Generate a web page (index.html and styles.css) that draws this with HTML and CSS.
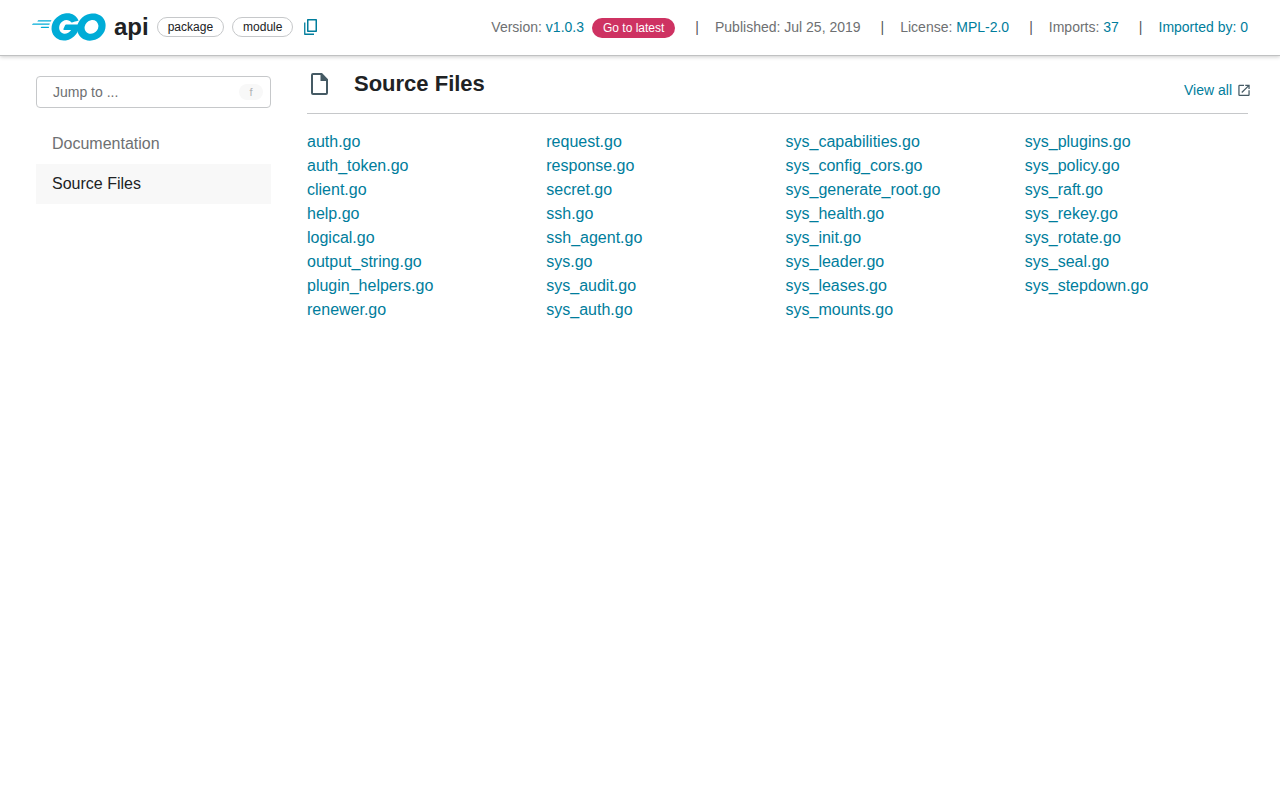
FILE: index.html
```html
<!DOCTYPE html>
<html lang="en">
<head>
<meta charset="utf-8">
<meta name="viewport" content="width=device-width, initial-scale=1">
<title>api package</title>
<link rel="stylesheet" href="styles.css">
</head>
<body>
<header class="header">
  <div class="header-title">
    <a class="logo" href="#" aria-label="Go">
      <svg width="74" height="28" viewBox="24.7 78 206.5 77" fill="#00acd7" fill-rule="evenodd" aria-hidden="true">
        <path d="M40.2,101.1c-0.4,0-0.5-0.2-0.3-0.5l2.1-2.7c0.2-0.3,0.7-0.5,1.1-0.5l35.7,0c0.4,0,0.5,0.3,0.3,0.6l-1.7,2.6c-0.2,0.3-0.7,0.6-1,0.6L40.2,101.1z"/>
        <path d="M25.1,110.3c-0.4,0-0.5-0.2-0.3-0.5l2.1-2.7c0.2-0.3,0.7-0.5,1.1-0.5l45.6,0c0.4,0,0.6,0.3,0.5,0.6l-0.8,2.4c-0.1,0.4-0.5,0.6-0.9,0.6L25.1,110.3z"/>
        <path d="M49.3,119.5c-0.4,0-0.5-0.3-0.3-0.6l1.4-2.5c0.2-0.3,0.6-0.6,1-0.6l20,0c0.4,0,0.6,0.3,0.6,0.7l-0.2,2.4c0,0.4-0.4,0.7-0.7,0.7L49.3,119.5z"/>
        <path d="M153.1,99.3c-6.3,1.6-10.6,2.8-16.8,4.4c-1.5,0.4-1.6,0.5-2.9-1c-1.5-1.7-2.6-2.8-4.7-3.8c-6.3-3.1-12.4-2.2-18.1,1.5c-6.8,4.4-10.3,10.9-10.2,19c0.1,8,5.6,14.6,13.5,15.7c6.8,0.9,12.5-1.5,17-6.6c0.9-1.1,1.7-2.3,2.7-3.7c-3.6,0-8.1,0-19.3,0c-2.1,0-2.6-1.3-1.9-3c1.3-3.1,3.7-8.3,5.1-10.9c0.3-0.6,1-1.6,2.5-1.6c5.1,0,23.9,0,36.4,0c-0.2,2.7-0.2,5.4-0.6,8.1c-1.1,7.2-3.8,13.8-8.2,19.6c-7.2,9.5-16.6,15.4-28.5,17c-9.8,1.3-18.9-0.6-26.9-6.6c-7.4-5.6-11.6-13-12.7-22.2c-1.3-10.9,1.9-20.7,8.5-29.3c7.1-9.3,16.5-15.2,28-17.3c9.4-1.7,18.4-0.6,26.5,4.9c5.3,3.5,9.1,8.3,11.6,14.1C154.7,98.5,154.3,99,153.1,99.3z"/>
        <path d="M186.2,154.6c-9.1-0.2-17.4-2.8-24.4-8.8c-5.9-5.1-9.6-11.6-10.8-19.3c-1.8-11.3,1.3-21.3,8.1-30.2c7.3-9.6,16.1-14.6,28-16.7c10.2-1.8,19.8-0.8,28.5,5.1c7.9,5.4,12.8,12.7,14.1,22.3c1.7,13.5-2.2,24.5-11.5,33.9c-6.6,6.7-14.7,10.9-24,12.8C191.5,154.2,188.8,154.3,186.2,154.6z M210,114.2c-0.1-1.3-0.1-2.3-0.3-3.3c-1.8-9.9-10.9-15.5-20.4-13.3c-9.3,2.1-15.3,8-17.5,17.4c-1.8,7.8,2,15.7,9.2,18.9c5.5,2.4,11,2.1,16.3-0.6C205.2,129.2,209.5,122.8,210,114.2z"/>
      </svg>
    </a>
    <h1 class="package-name">api</h1>
    <span class="chip">package</span>
    <span class="chip">module</span>
    <button class="copy" type="button" aria-label="Copy path">
      <svg width="13" height="16" viewBox="0 0 13 16" fill="none" stroke="#007d9c" stroke-linejoin="round" aria-hidden="true">
        <path d="M3.75 0.75h8.5v11.5h-8.5z" stroke-width="1.5"/>
        <path d="M0.75 3.5v11.75H10" stroke-width="1.3"/>
      </svg>
    </button>
  </div>
  <ul class="details">
    <li>Version: <a href="#">v1.0.3</a><a class="latest" href="#">Go to latest</a></li>
    <li>Published: Jul 25, 2019</li>
    <li>License: <a href="#">MPL-2.0</a></li>
    <li>Imports: <a href="#">37</a></li>
    <li><a href="#">Imported by: 0</a></li>
  </ul>
</header>
<div class="layout">
  <aside class="sidebar">
    <button class="jump" type="button"><span>Jump to ...</span><kbd class="key">f</kbd></button>
    <nav class="outline" aria-label="Outline">
      <a href="#">Documentation</a>
      <a class="current" href="#files" aria-current="true">Source Files</a>
    </nav>
  </aside>
  <main class="content" id="files">
    <div class="section-head">
      <h2 class="section-title">
        <svg width="17" height="22" viewBox="0 0 17 22" aria-hidden="true">
          <path fill="#455a64" fill-rule="evenodd" d="M2 0h9l6 6.300v13.700a2 2 0 0 1-2 2H2a2 2 0 0 1-2-2V2a2 2 0 0 1 2-2zM2 2v18h13V8H9.500V2z"/>
        </svg>
        Source Files
      </h2>
      <a class="view-all" href="#">View all
        <svg width="12" height="12" viewBox="3 2 18 19" fill="#455a64" aria-hidden="true"><path d="M19 19H5V5h7V3H5a2 2 0 0 0-2 2v14a2 2 0 0 0 2 2h14c1.100 0 2-.9 2-2v-7h-2v7zM14 3v2h3.590l-9.830 9.830 1.410 1.410L19 6.410V10h2V3h-7z"/></svg>
      </a>
    </div>
    <ul class="files">
      <li><a href="#">auth.go</a></li>
      <li><a href="#">auth_token.go</a></li>
      <li><a href="#">client.go</a></li>
      <li><a href="#">help.go</a></li>
      <li><a href="#">logical.go</a></li>
      <li><a href="#">output_string.go</a></li>
      <li><a href="#">plugin_helpers.go</a></li>
      <li><a href="#">renewer.go</a></li>
      <li><a href="#">request.go</a></li>
      <li><a href="#">response.go</a></li>
      <li><a href="#">secret.go</a></li>
      <li><a href="#">ssh.go</a></li>
      <li><a href="#">ssh_agent.go</a></li>
      <li><a href="#">sys.go</a></li>
      <li><a href="#">sys_audit.go</a></li>
      <li><a href="#">sys_auth.go</a></li>
      <li><a href="#">sys_capabilities.go</a></li>
      <li><a href="#">sys_config_cors.go</a></li>
      <li><a href="#">sys_generate_root.go</a></li>
      <li><a href="#">sys_health.go</a></li>
      <li><a href="#">sys_init.go</a></li>
      <li><a href="#">sys_leader.go</a></li>
      <li><a href="#">sys_leases.go</a></li>
      <li><a href="#">sys_mounts.go</a></li>
      <li><a href="#">sys_plugins.go</a></li>
      <li><a href="#">sys_policy.go</a></li>
      <li><a href="#">sys_raft.go</a></li>
      <li><a href="#">sys_rekey.go</a></li>
      <li><a href="#">sys_rotate.go</a></li>
      <li><a href="#">sys_seal.go</a></li>
      <li><a href="#">sys_stepdown.go</a></li>
    </ul>
  </main>
</div>
</body>
</html>
```

FILE: styles.css
```css
* {
  box-sizing: border-box;
}

body {
  margin: 0;
  background: #fff;
  color: #202224;
  font: 16px/24px "Liberation Sans", Arial, sans-serif;
}

h1,
h2,
ul {
  margin: 0;
  padding: 0;
}

ul {
  list-style: none;
}

a {
  color: #007d9c;
  text-decoration: none;
}

svg {
  display: block;
  flex: none;
}

.header {
  display: flex;
  align-items: center;
  justify-content: space-between;
  padding: 11px 32px 12px;
  border-bottom: 1px solid #c0c1c2;
  box-shadow: 0 1px 4px rgba(0, 0, 0, 0.2);
}

.header-title {
  display: flex;
  align-items: center;
  gap: 8px;
}

.package-name {
  font-size: 24px;
  line-height: 32px;
}

.chip {
  padding: 0 10px;
  border: 1px solid #c6c8ca;
  border-radius: 10px;
  font-size: 12px;
  line-height: 18px;
}

.copy {
  padding: 2px 3px;
  border: 0;
  background: none;
}

.details {
  display: flex;
  align-items: baseline;
  color: #6e7072;
  font-size: 14px;
  line-height: 20px;
  white-space: nowrap;
}

.details li {
  display: flex;
  align-items: baseline;
  white-space: pre;
}

.details li + li::before {
  content: "|";
  margin: 0 16px 0 20px;
  color: #555759;
}

.latest {
  margin-left: 8px;
  padding: 1px 11px;
  border-radius: 10px;
  background: #ce3262;
  color: #fff;
  font-size: 12px;
  line-height: 18px;
}

.layout {
  display: flex;
  gap: 36px;
  padding: 0 32px 32px 36px;
}

.sidebar {
  flex: 0 0 235px;
  padding-top: 20px;
}

.jump {
  display: flex;
  align-items: center;
  justify-content: space-between;
  width: 100%;
  height: 32px;
  padding: 0 7px 0 16px;
  border: 1px solid #c6c8ca;
  border-radius: 4px;
  background: #fff;
  color: #6e7072;
  font: inherit;
  font-size: 14px;
}

.key {
  width: 24px;
  border-radius: 8px;
  background: #f8f8f8;
  color: #b0b2b4;
  font: 11px/16px "Liberation Sans", Arial, sans-serif;
  text-align: center;
}

.outline {
  margin-top: 16px;
}

.outline a {
  display: block;
  padding: 8px 16px;
  color: #6e7072;
}

.outline .current {
  background: #f8f8f8;
  color: #202224;
}

.content {
  flex: 1;
  min-width: 0;
}

.section-head {
  display: flex;
  align-items: flex-end;
  justify-content: space-between;
  padding: 12px 0 13px;
  border-bottom: 1px solid #c6c8ca;
}

.section-title {
  display: flex;
  align-items: center;
  gap: 26px;
  padding: 0 0 0 4px;
  font-size: 22px;
  line-height: 32px;
}

.view-all {
  display: flex;
  align-items: center;
  gap: 6px;
  margin-right: -2px;
  font-size: 14px;
  line-height: 20px;
}

.files {
  columns: 4;
  column-gap: 16px;
  padding-top: 16px;
}
```
